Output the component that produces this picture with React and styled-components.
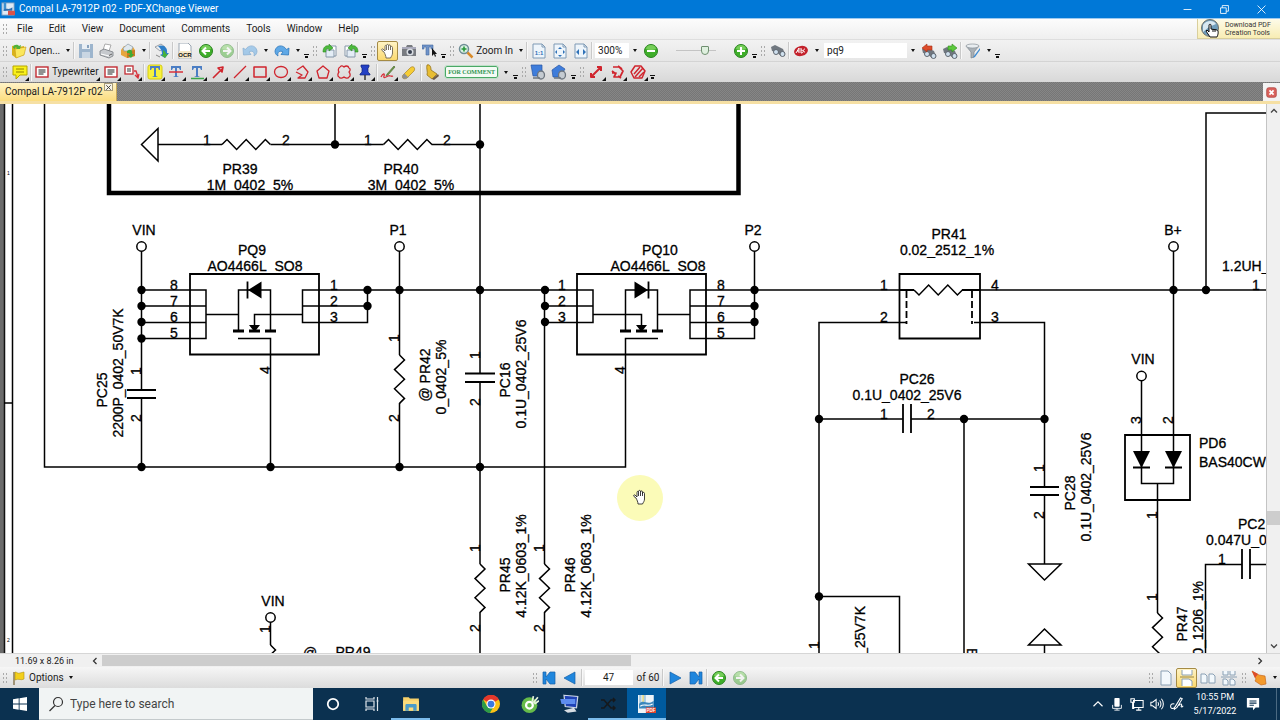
import React from "react";
import styled, { createGlobalStyle } from "styled-components";

/* ---------- small drawings ---------- */

const Ico = ({ size = 16, children }) => (
  <svg width={size} height={size} viewBox="0 0 16 16" fill="none" aria-hidden="true">
    {children}
  </svg>
);

const AppIcon = () => (
  <Ico size={14}>
    <rect x="1" y="1" width="14" height="14" fill="#dfeaf4" stroke="#6f93b8" />
    <rect x="3" y="1" width="3" height="9" fill="#3c8fd0" />
    <path d="M3 9C6 6 9 10 13 6v4H3z" fill="#2f6fb0" />
    <rect x="8" y="10" width="8" height="5" fill="#d9534a" />
  </Ico>
);
const OpenIcon = () => (
  <Ico>
    <path d="M1 3l5-1 2 2 5-1v9l-8 3-4-3z" fill="#d9b21c" />
    <path d="M4 6l11-2-2 8-8 3z" fill="#fbe75c" stroke="#c69c13" strokeWidth=".6" />
    <path d="M2 5c0-4 5-4 6-2l2-1-1 4-4 0 1-1c-1-1-2-1-2 1z" fill="#4fb33a" />
  </Ico>
);
const SaveIcon = () => (
  <Ico>
    <path d="M1 1h14v14H1z" fill="#9db5cd" />
    <path d="M4 1h8v5H4z" fill="#e8eef4" />
    <path d="M4 9h8v6H4z" fill="#c9d6e3" />
    <path d="M9 2h2v3H9z" fill="#86a1bd" />
  </Ico>
);
const PrintIcon = () => (
  <Ico>
    <path d="M6 1l6 1-2 6-6-1z" fill="#fff" stroke="#999" strokeWidth=".8" />
    <path d="M1 8l4-2 9 3v4l-4 2-9-3z" fill="#c6c9cd" stroke="#777b80" strokeWidth=".8" />
    <path d="M2 11l8 2 3-2" stroke="#fff" />
    <path d="M10 12.500l3-1.500" stroke="#555" />
  </Ico>
);
const PackageIcon = () => (
  <Ico>
    <path d="M1 7l3-4 9 1 2 3v6l-8 2-6-3z" fill="#e7a63d" />
    <path d="M7 8l8-1v6l-8 2z" fill="#c97b22" />
    <path d="M3 5l5-4 5 3-2 4-7 0z" fill="#dfe8ee" stroke="#8a9aa5" strokeWidth=".7" />
    <path d="M7 8c4-3 6 0 5 3l2 0-3 4-3-3h2c0-2-1-2-3-2z" fill="#3faa33" />
  </Ico>
);
const ScanIcon = () => (
  <Ico>
    <path d="M1 4l6-3 4 3-5 4z" fill="#e9edf1" stroke="#7a8088" strokeWidth=".7" />
    <path d="M4 3c6-2 10 2 9 7h2l-4 5-5-3 2-1c0-3-1-5-4-8z" fill="#2f7fc8" />
    <path d="M9 7c2 1 3 3 3 4h2l-3 4-4-3h2c0-2 0-3 0-5z" fill="#46b13b" />
    <path d="M2 12l4 2" stroke="#888" />
  </Ico>
);
const OcrIcon = () => (
  <Ico>
    <path d="M2 0h9l3 3v13H2z" fill="#fff" stroke="#9aa5b1" />
    <rect x="2" y="8" width="12" height="7" fill="#f5e7c4" />
    <text x="8" y="14" fontSize="6" fontWeight="bold" textAnchor="middle" fill="#111" fontFamily="Liberation Sans, sans-serif">
      OCR
    </text>
  </Ico>
);
const Round = ({ dir, faded }) => (
  <Ico>
    <g opacity={faded ? 0.45 : 1}>
      <circle cx="8" cy="8" r="6.500" fill="#3fae2a" stroke="#2a8420" />
      <path d="M3 6a5 4 0 0 1 10 0 9 5 0 0 1-10 0" fill="#8ddb6c" opacity=".7" />
      {dir === "left" && <path d="M12 8H5M8 4.500L4.500 8 8 11.500" stroke="#fff" strokeWidth="2" />}
      {dir === "right" && <path d="M4 8h7M8 4.500L11.500 8 8 11.500" stroke="#fff" strokeWidth="2" />}
      {dir === "minus" && <path d="M4 8h8" stroke="#fff" strokeWidth="2" />}
      {dir === "plus" && <path d="M4 8h8M8 4v8" stroke="#fff" strokeWidth="2" />}
    </g>
  </Ico>
);
const Turn = ({ flip, faded }) => (
  <Ico>
    <g transform={flip ? "translate(16 0) scale(-1 1)" : undefined} opacity={faded ? 0.5 : 1}>
      <path
        d="M1 5l2.500 1.500C7 1 14 2 15 8c0 2-1 4-3 5 1-4-2-6-5-4l2 2.500-7.500 .5z"
        fill="#5fa8e6"
        stroke="#2e78bd"
        strokeWidth=".8"
      />
    </g>
  </Ico>
);
const RotateIcon = ({ flip }) => (
  <Ico>
    <g transform={flip ? "translate(16 0) scale(-1 1)" : undefined}>
      <path d="M8 3h6v10H8z" fill="#fff" stroke="#8596a8" />
      <path d="M4 7h8v7H4z" fill="#e4edf6" stroke="#8596a8" />
      <path d="M1 9c0-5 3-7 6-6V1l4 4-4 3V6C5 5 3 7 4 9z" fill="#4dba3d" stroke="#2b8a22" strokeWidth=".6" />
    </g>
  </Ico>
);
const handPath =
  "M4 9L2 7.500C1 6.500 2 5.500 3 6l2 2V3.500C5 2 6.500 2 6.500 3.500V2.500C6.500 1 8.500 1 8.500 2.500V3C8.500 1.500 10.500 1.500 10.500 3v1.500C10.500 3 12.500 3 12.500 4.500V10c0 2-1 3-2 5H6c0-2-1-4-2-6zM6.500 3.500V7M8.500 3v4M10.500 4v3";
const HandIcon = () => (
  <Ico>
    <path d={handPath} fill="#fff" stroke="#6b6250" strokeWidth=".9" />
  </Ico>
);
const CameraIcon = () => (
  <Ico>
    <path d="M1 4h4l1-2h5l1 2h3v9H1z" fill="#787b80" />
    <rect x="1" y="4" width="14" height="2" fill="#aab" />
    <circle cx="9" cy="9" r="3.500" fill="#d9dde2" />
    <circle cx="9" cy="9" r="2" fill="#3a4250" />
  </Ico>
);
const TextSelectIcon = () => (
  <Ico>
    <path d="M0 2h11v4H9V4H7v8H4V4H2v2H0z" fill="#6f93c9" stroke="#4468a0" strokeWidth=".6" />
    <path d="M10 5v8l2-2 1 3 1-1-1-2h2z" fill="#111" />
  </Ico>
);
const ZoomInIcon = () => (
  <Ico>
    <circle cx="6" cy="6" r="4.500" fill="#d8f0e2" stroke="#6f8d96" strokeWidth="1.500" />
    <path d="M3.500 6h5M6 3.500v5" stroke="#27973a" strokeWidth="1.600" />
    <path d="M9.500 9.500l5 5" stroke="#d88a2a" strokeWidth="2.500" />
  </Ico>
);
const Sheet = ({ children }) => (
  <Ico>
    <path d="M2 1h9l3 3v11H2z" fill="#eef5fb" stroke="#7f9ab5" />
    <path d="M11 1v3h3" stroke="#7f9ab5" />
    {children}
  </Ico>
);
const ActualIcon = () => (
  <Sheet>
    <text x="8" y="12" fontSize="6" fontWeight="bold" textAnchor="middle" fill="#2f72b8" fontFamily="Liberation Sans, sans-serif">
      1:1
    </text>
  </Sheet>
);
const FitPageIcon = () => (
  <Sheet>
    <path d="M8 4l2 2H6zM8 14l2-2H6zM3 9l2-2v4zM13 9l-2-2v4z" fill="#2f72b8" />
  </Sheet>
);
const FitWidthIcon = () => (
  <Sheet>
    <path d="M3 9l3-3v6zM13 9l-3-3v6z" fill="#2f72b8" />
  </Sheet>
);
const Binoc = ({ x = 0, y = 0 }) => (
  <g transform={`translate(${x} ${y})`}>
    <path d="M1 4l4-2 8 4 2 5-4 2-5-4-4-1z" fill="#70777f" />
    <circle cx="6" cy="9" r="2.500" fill="#cfe0ee" stroke="#5d656e" />
    <circle cx="12.500" cy="11" r="2.500" fill="#cfe0ee" stroke="#5d656e" />
  </g>
);
const FindIcon = () => (
  <Ico>
    <Binoc />
  </Ico>
);
const FindPrev = () => (
  <Ico>
    <Binoc y={2} />
    <path d="M1 5l5-4v2h5v4H6v2z" fill="#dd4b2a" stroke="#a52f16" strokeWidth=".6" />
  </Ico>
);
const FindNext = () => (
  <Ico>
    <Binoc y={2} />
    <path d="M15 5l-5-4v2H6v4h4v2z" fill="#5cc83c" stroke="#2f8a1d" strokeWidth=".6" />
  </Ico>
);
const AbcIcon = () => (
  <Ico>
    <ellipse cx="8" cy="8" rx="7" ry="5" transform="rotate(-15 8 8)" fill="#c3212b" />
    <path d="M3 10l3-5v5M4 8h2M8 5v5c3 0 3-3 0-3M12 6c-2 0-2 3 0 3" stroke="#fff" />
  </Ico>
);
const FunnelIcon = () => (
  <Ico>
    <path d="M1 3l5 6v6l3-1V9l5-6z" fill="#a9b0b6" stroke="#7c848b" strokeWidth=".7" />
    <ellipse cx="7.500" cy="3" rx="6.500" ry="2" fill="#e9edf0" stroke="#8a9299" strokeWidth=".7" />
    <path d="M15 5l-6 8-1 2 2-1 5-7z" fill="#3b8ad2" />
  </Ico>
);
const NoteIcon = () => (
  <Ico>
    <path d="M1 2h14v9H8l-4 4v-4H1z" fill="#f9f11a" stroke="#b7a600" />
    <path d="M4 5h8M4 8h8" stroke="#8f8200" />
  </Ico>
);
const TypeIcon = () => (
  <Ico>
    <rect x="2" y="3" width="12" height="10" fill="#fff" stroke="#c22c33" strokeWidth="1.400" />
    <path d="M4.500 6h7M4.500 8h7M4.500 10h5" stroke="#222" />
  </Ico>
);
const CalloutIcon = () => (
  <Ico>
    <rect x="1" y="2" width="8" height="8" fill="#fff" stroke="#c22c33" strokeWidth="1.300" />
    <path d="M3 5h4M3 7h4" stroke="#333" />
    <path d="M10 7l2 0 2 6M11 11l3 3 1-4" stroke="#d8303a" strokeWidth="1.300" />
  </Ico>
);
const MarkT = ({ kind }) => (
  <Ico>
    {kind === "high" && <rect x="1" y="1" width="14" height="14" rx="2" fill="#f8f23c" stroke="#d5cc13" />}
    <path d="M3 2h10v4h-1l-1-2H9v8l2 1H5l2-1V4H5L4 6H3z" fill="#4b7ec4" />
    {kind === "strike" && <path d="M1 8h14" stroke="#d8303a" strokeWidth="1.500" />}
    {kind === "under" && <path d="M2 14.500h13" stroke="#3aa648" strokeWidth="1.500" />}
  </Ico>
);
const Red = ({ d, w = 1.3, children }) => (
  <Ico>
    <g stroke="#d0252e" strokeWidth={w} strokeLinejoin="round">
      {d && <path d={d} />}
      {children}
    </g>
  </Ico>
);
const PinIcon = () => (
  <Ico>
    <path d="M4 1h8v2l-1 1v4l2 2v1H3v-1l2-2V4L4 3z" fill="#2340c4" stroke="#14257c" strokeWidth=".7" />
    <path d="M8 11v5" stroke="#333" strokeWidth="1.500" />
  </Ico>
);
const PencilIcon = () => (
  <Ico>
    <path d="M14 2l-7 8-1 2 2-1 7-8z" fill="#6a9a45" stroke="#55703a" strokeWidth=".7" />
    <path d="M1 13c2-4 4-4 3-1s2 1 4 0 3 1 5 0" stroke="#d8303a" strokeWidth="1.300" />
  </Ico>
);
const EraserIcon = () => (
  <Ico>
    <path d="M2 11l7-7c3-3 6 0 4 3l-7 7c-3 2-6 0-4-3z" fill="#f6cd35" stroke="#a8832a" strokeWidth=".7" />
    <path d="M2 11l1.500-1.500 4 4L6 14c-3 2-6 0-4-3z" fill="#8d8f94" />
  </Ico>
);
const StampIcon = () => (
  <Ico>
    <path d="M3 1c3-1 4 2 4 5l6 4-5 5-5-4c1-3-1-7 0-10z" fill="#e8bd32" stroke="#94721b" strokeWidth=".8" />
    <path d="M8 15l6-5 1 2-5 4z" fill="#6e5a44" />
  </Ico>
);
const StampSheet = ({ tilt }) => (
  <Ico>
    <path d={tilt ? "M1 6l7-5 6 4-5 8-7 0z" : "M1 1h11v11H3z"} fill="#3f7ddb" stroke="#2a56a3" strokeWidth=".7" />
    <ellipse cx="11" cy="11" rx="3.500" ry="4" fill="#c5cbd1" stroke="#6c747d" strokeWidth="1.300" />
    <path d="M3 14h7" stroke="#6c747d" strokeWidth="1.500" />
  </Ico>
);
const FlagIcon = () => (
  <Ico>
    <path d="M3 2v13" stroke="#8a7a55" strokeWidth="1.500" />
    <path d="M4 2c2 0 3 2 5 1l4-1v7c-3 2-5-1-9 1z" fill="#f3cf1b" stroke="#b2920d" strokeWidth=".6" />
  </Ico>
);
const Skip = ({ bar, right }) => (
  <Ico>
    <g transform={right ? "translate(16 0) scale(-1 1)" : undefined} fill="#1f86dd" stroke="#1460a8" strokeWidth=".7">
      {bar ? <path d="M2 2h3v5l4-5h5v12H9L5 9v5H2z" /> : <path d="M2 8l11-6v12z" />}
    </g>
  </Ico>
);
const LayoutIcon = ({ kind }) => (
  <Ico>
    <g fill="#f2f8fc" stroke="#8aa0b4">
      {kind === "one" && <path d="M3 1h7l3 3v11H3z" />}
      {kind === "cont" && (
        <>
          <path d="M3 0v5h10V0M3 16V9h7l3 2v5" fill="#fff" />
          <path d="M1 7h14" stroke="#9a8440" />
        </>
      )}
      {kind === "two" && <path d="M1 4h4l2 2v7H1zM9 4h4l2 2v7H9z" />}
      {kind === "four" && <path d="M2 1v4h5V1M9 1v4h5V1M2 15V9h3l2 2v4zM9 15V9h3l2 2v4zM0 7h16" />}
    </g>
  </Ico>
);
const PointerIcon = () => (
  <Ico>
    <path d="M1 1l7 4 6 1 1 8-5 1-6-4 1-2z" fill="#f39a2c" stroke="#c9691b" strokeWidth=".7" />
    <path d="M1 1l6 3-3 4z" fill="#dd4b2a" />
  </Ico>
);

/* ---------- schematic ---------- */

const zig = (x, y) =>
  `M${x} ${y}l5 -5 9.600 10 9.600 -10 9.600 10 9.600 -10 5 5`;
const zagDown = (x, y) =>
  `M${x} ${y}l5 5 -10 9.600 10 9.600 -10 9.600 10 9.600 -5 5`;

const wires = [
  "M12.500 90V660M44.500 90V467H625.500V338.500H658",
  "M335 90V144.500M158 144.500H222M270.500 144.500H383.500M431.500 144.500H480",
  "M480 90V373M480 382V564M480 612V660",
  "M141.500 251V390M141.500 398V467",
  "M141.500 290H206V338.500H141.500M141.500 306H206M141.500 322.500H206",
  "M206 314.500H238.500M238.500 331V290H270.500V331M302.500 314.500H254.500V326",
  "M238 338.500H270.500V467",
  "M545 290H302.500V322.500H367.500V290M302.500 306H367.500",
  "M399.500 251V355M399.500 403V467",
  "M545 290H593V322.500H545M545 306H593M544.500 290V564M544.500 612V660",
  "M593 314.500H641.500V326M625.500 331V290H657.500V331M657.500 314.500H690",
  "M754.500 251V338.500H690V290H914M690 306H754.500M690 322.500H754.500",
  "M962 290H1266M1206 290V113H1270",
  "M906 322.500H819V660M819 419H903M911 419H1044.500M964 419V660",
  "M974 322.500H1044.500V487M1044.500 495V564M819 596.500H899.500V660",
  "M1044.500 645V660",
  "M1173.500 251V483.500H1141.500V381M1157.500 483.500V613",
  "M1205.500 660V564.500H1242M1250 564.500H1270",
  "M270.500 622V645",
  "M4 403H12",
];

const parts = [
  "M141.500 144.500L158 128.500V161z",
  zig(222, 144.5),
  zig(383.5, 144.5),
  "M914 290l5 5 9.600 -10 9.600 10 9.600 -10 9.600 10 5 -5",
  zagDown(399.5, 355),
  zagDown(480, 564),
  zagDown(544.5, 564),
  zagDown(270.5, 645),
  zagDown(1157.5, 613),
  "M1028.500 564H1061L1044.500 580z",
  "M1028.500 645H1061L1044.500 629z",
];

const bold = [
  "M190 274H319V354.500H190z",
  "M577 274H706V354.500H577z",
  "M899.500 274H980V338.500H899.500z",
  "M1125 435H1190V500H1125z",
  "M127 390H156M127 398H156",
  "M465 373.500H495M465 382H495",
  "M903 404V433M911 404V433",
  "M1030 487H1059M1030 495H1059",
  "M1242 549V579M1250 549V579",
  "M247.500 281.500V298.500M648.500 281.500V298.500",
  "M1133 467.500H1150M1165 467.500H1182",
  "M899.500 290H914M962 290H980",
];

const dots = [
  [335, 144.5], [480, 144.5], [141.5, 290], [141.5, 306], [141.5, 322], [141.5, 338.5],
  [367.5, 290], [367.5, 306], [399.5, 290], [480, 290], [545, 290], [545, 306], [545, 322],
  [754.5, 290], [754.5, 306], [754.5, 322], [1173.5, 290], [1206, 290],
  [141.5, 467], [270.5, 467], [399.5, 467], [480, 467],
  [819, 419], [964, 419], [1044.5, 419], [819, 596.5],
];

const terminals = [
  [141.5, 246.5], [399.5, 246.5], [754.5, 246.5], [1173.5, 246.5], [1141.5, 376], [270.5, 617.5],
];

// [text, centre x, baseline y]
const labels = [
  ["1", 207, 145], ["2", 286, 145], ["1", 368, 145], ["2", 447, 145],
  ["PR39", 240, 174], ["1M_0402_5%", 250, 190], ["PR40", 401, 174], ["3M_0402_5%", 411, 190],
  ["VIN", 144, 235], ["P1", 398, 235], ["P2", 753, 235], ["B+", 1173, 235], ["VIN", 1143, 364], ["VIN", 273, 606],
  ["PQ9", 252, 255], ["AO4466L_SO8", 255, 271], ["PQ10", 660, 255], ["AO4466L_SO8", 658, 271],
  ["8", 174, 290], ["7", 174, 306], ["6", 174, 322], ["5", 174, 338],
  ["1", 334, 290], ["2", 334, 306], ["3", 334, 322],
  ["1", 562, 290], ["2", 562, 306], ["3", 562, 322],
  ["8", 721, 290], ["7", 721, 306], ["6", 721, 322], ["5", 721, 338],
  ["PR41", 949, 239], ["0.02_2512_1%", 947, 255],
  ["1", 884, 290], ["2", 884, 322], ["4", 995, 290], ["3", 995, 322],
  ["PC26", 917, 384], ["0.1U_0402_25V6", 907, 400], ["1", 884, 419], ["2", 931, 419],
  ["1", 1256, 290], ["1", 1222, 564], ["@", 310, 658], ["PR49", 353, 657],
];

// labels that run to the right edge: [text, left x, baseline y]
const cutLabels = [
  ["1.2UH_", 1222, 271], ["PD6", 1199, 448], ["BAS40CW", 1199, 467],
  ["PC2", 1238, 529], ["0.047U_0", 1206, 545],
];

// turned a quarter left: [text, baseline x, centre y]
const upright = [
  ["PC25", 107, 390], ["2200P_0402_50V7K", 123, 373], ["1", 141, 371], ["2", 141, 418],
  ["4", 270, 370], ["1", 399, 338], ["2", 399, 418], ["@ PR42", 430, 375], ["0_0402_5%", 446, 377],
  ["1", 480, 355], ["2", 480, 402], ["PC16", 510, 380], ["0.1U_0402_25V6", 526, 374], ["4", 625, 370],
  ["1", 480, 548], ["2", 480, 628], ["PR45", 510, 575], ["4.12K_0603_1%", 526, 566],
  ["1", 544, 548], ["2", 544, 628], ["PR46", 575, 575], ["4.12K_0603_1%", 591, 566],
  ["1", 270, 629], ["1", 819, 645], ["1", 1044, 468], ["2", 1044, 515],
  ["PC28", 1075, 493], ["0.1U_0402_25V6", 1091, 487], ["3", 1141, 420], ["2", 1173, 420],
  ["1", 1157, 515], ["1", 1157, 597], ["PR47", 1187, 624],
];

const scrollTop = 104;

const Schematic = () => (
  <Drawing role="img" aria-label="Power input schematic">
    <g transform={`translate(0 ${-scrollTop})`}>
      <rect x="0" y="90" width="4" height="580" fill="#6b6b6b" />
      <path d="M4.500 90V670" stroke="#111" strokeWidth="1.500" />
      <g stroke="#000" fill="none">
        <path d="M109 90V193H738.500V90" strokeWidth="4.500" />
        <path d={wires.join("")} strokeWidth="1.500" />
        <path d={parts.join("")} strokeWidth="1.500" />
        <path d={bold.join("")} strokeWidth="1.800" />
        <path d="M906.500 291V324M972 291V324" strokeWidth="1.800" strokeDasharray="7 3" />
        <path d="M233 331H244M249 331H260M265 331H276M620 331H631M636 331H647M652 331H663" strokeWidth="3" />
      </g>
      <path
        d="M248 290L261.500 281.500V298.500zM648 290L634.500 281.500V298.500zM249 325H260L254.500 332zM636 325H647L641.500 332zM1133 451H1150L1141.500 468zM1165 451H1182L1173.500 468z"
        fill="#000"
      />
      {dots.map(([x, y]) => (
        <circle key={`${x}-${y}`} cx={x} cy={y} r="4.200" />
      ))}
      {terminals.map(([x, y]) => (
        <circle key={`${x}-${y}`} cx={x} cy={y} r="4.700" fill="#fff" stroke="#000" strokeWidth="1.500" />
      ))}
      {labels.map(([t, x, y]) => (
        <Label key={`${x}-${y}`} x={x} y={y} textAnchor="middle">{t}</Label>
      ))}
      {cutLabels.map(([t, x, y]) => (
        <Label key={t} x={x} y={y}>{t}</Label>
      ))}
      {upright.map(([t, x, y]) => (
        <Label key={`${x}-${y}`} transform={`translate(${x} ${y}) rotate(-90)`} textAnchor="middle">{t}</Label>
      ))}
      <Label transform="translate(865 606) rotate(-90)" textAnchor="end">_25V7K</Label>
      <Label transform="translate(1203 581) rotate(-90)" textAnchor="end">0_1206_1%</Label>
      <Label transform="translate(967 648) rotate(90)">E</Label>
      <Ruler x="7" y="175">1</Ruler>
      <Ruler x="7" y="642">2</Ruler>
      <circle cx="640" cy="498" r="23" fill="#fbfbb8" />
      <path d={handPath} transform="translate(632 489)" fill="#fff" stroke="#111" strokeWidth=".8" />
    </g>
  </Drawing>
);

/* ---------- page ---------- */

const menus = ["File", "Edit", "View", "Document", "Comments", "Tools", "Window", "Help"];

const T = ({ label, more, on, children }) => (
  <ToolButton type="button" aria-label={label} $more={more} $on={on}>
    {children}
  </ToolButton>
);
const Drop = ({ label = "More" }) => <DropButton type="button" aria-label={label} />;
const Overflow = () => <OverflowButton type="button" aria-label="Toolbar options" />;

const App = () => {
  return (
    <Window>
      <GlobalStyle />
      <TitleBar>
        <AppIcon />
        <Title>Compal LA-7912P r02 - PDF-XChange Viewer</Title>
        <Caption type="button" aria-label="Minimize">
          <Ico size={9}><path d="M1 8h14" stroke="#fff" strokeWidth="1.500" /></Ico>
        </Caption>
        <Caption type="button" aria-label="Restore">
          <Ico size={9}><path d="M1 5h10v10H1zM4 5V1h11v10h-4" stroke="#fff" strokeWidth="1.500" /></Ico>
        </Caption>
        <Caption type="button" aria-label="Close">
          <Ico size={9}><path d="M1 1l14 14M15 1L1 15" stroke="#fff" strokeWidth="1.500" /></Ico>
        </Caption>
      </TitleBar>

      <MenuBar>
        <Grip />
        {menus.map((m) => (
          <MenuItem type="button" key={m}>{m}</MenuItem>
        ))}
        <Download href="#tools">
          <svg width="24" height="20" viewBox="0 0 24 20" aria-hidden="true">
            <circle cx="10" cy="9" r="8.500" fill="#6f9dbb" stroke="#71716a" />
            <path d="M3 6c3-5 11-5 13-1l-7 3-6 5z" fill="#d9e9f2" />
            <path d="M10 18l-4-6 1-1 2 2V6c0-1 2-1 2 0v4l6 1c2 1 1 5 0 7z" fill="#fff" stroke="#111" />
            <path d="M13 10v3M15 10v3" stroke="#111" />
          </svg>
          <span>Download PDF<br />Creation Tools</span>
        </Download>
      </MenuBar>

      <Toolbar>
        <Grip />
        <LabelButton type="button"><OpenIcon />Open...</LabelButton>
        <Drop />
        <Sep />
        <T label="Save"><SaveIcon /></T>
        <T label="Print"><PrintIcon /></T>
        <T label="Send by e-mail"><PackageIcon /></T>
        <Drop />
        <Sep />
        <T label="Scan"><ScanIcon /></T>
        <Sep />
        <T label="Recognize text"><OcrIcon /></T>
        <T label="Back"><Round dir="left" /></T>
        <T label="Forward"><Round dir="right" faded /></T>
        <Sep />
        <T label="Undo"><Turn faded /></T>
        <Drop />
        <T label="Redo"><Turn flip /></T>
        <Drop />
        <Overflow />
        <Grip />
        <T label="Rotate left"><RotateIcon /></T>
        <T label="Rotate right"><RotateIcon flip /></T>
        <Overflow />
        <Grip />
        <T label="Hand tool" on><HandIcon /></T>
        <T label="Snapshot"><CameraIcon /></T>
        <T label="Select text"><TextSelectIcon /></T>
        <Overflow />
        <Grip />
        <LabelButton type="button"><ZoomInIcon />Zoom In</LabelButton>
        <Drop />
        <Sep />
        <T label="Actual size"><ActualIcon /></T>
        <T label="Fit page"><FitPageIcon /></T>
        <T label="Fit width"><FitWidthIcon /></T>
        <Sep />
        <Field aria-label="Zoom level" defaultValue="300%" $w={34} />
        <Drop />
        <T label="Zoom out"><Round dir="minus" /></T>
        <Slider type="range" aria-label="Zoom" min="0" max="100" defaultValue="66" />
        <T label="Zoom in"><Round dir="plus" /></T>
        <Overflow />
        <Grip />
        <T label="Find"><FindIcon /></T>
        <Sep />
        <T label="Search provider"><AbcIcon /></T>
        <Drop />
        <Field aria-label="Search text" defaultValue="pq9" $w={83} />
        <Drop />
        <T label="Find previous"><FindPrev /></T>
        <T label="Find next"><FindNext /></T>
        <Sep />
        <T label="Search options"><FunnelIcon /></T>
        <Drop />
        <Overflow />
      </Toolbar>

      <Toolbar $low>
        <Grip />
        <T label="Sticky note" more><NoteIcon /></T>
        <Sep />
        <LabelButton type="button" $more><TypeIcon />Typewriter</LabelButton>
        <T label="Text box" more><TypeIcon /></T>
        <T label="Callout" more><CalloutIcon /></T>
        <Sep />
        <T label="Highlight" more><MarkT kind="high" /></T>
        <T label="Strike out" more><MarkT kind="strike" /></T>
        <T label="Underline" more><MarkT kind="under" /></T>
        <T label="Arrow" more><Red d="M3 14L12 5M8 4l5-1-1 5z" w={1.6} /></T>
        <T label="Line" more><Red d="M3 14L15 2" /></T>
        <T label="Rectangle" more><Red d="M2 3h12v10H2z" w={1.5} /></T>
        <T label="Oval" more><Red><ellipse cx="8" cy="8" rx="6.500" ry="5.500" /></Red></T>
        <T label="Polyline" more><Red d="M3 6l6-4 5 6-3 6H4l4-3-6-3" /></T>
        <T label="Polygon" more><Red d="M8 2l6 5-2 7H4L2 7z" /></T>
        <T label="Cloud" more><Red d="M4 3c1-2 3-1 4 0 1-1 4-2 5 1 2 1 1 3 0 4 1 1 2 4 0 5-1 2-4 1-5 0-1 1-4 2-5 0-2-1-1-4 0-5-1-1-1-4 1-5z" /></T>
        <T label="File attachment" more><PinIcon /></T>
        <Sep />
        <T label="Pencil" more><PencilIcon /></T>
        <T label="Eraser"><EraserIcon /></T>
        <Sep />
        <T label="Stamp tool"><StampIcon /></T>
        <StampButton type="button"><span>FOR COMMENT</span></StampButton>
        <Drop />
        <Overflow />
        <Grip />
        <T label="Stamps palette"><StampSheet /></T>
        <T label="Add stamp"><StampSheet tilt /></T>
        <Overflow />
        <Grip />
        <T label="Distance" more><Red d="M4 12l8-8M3 9v4h4M9 3h4v4" w={2} /></T>
        <T label="Perimeter" more><Red d="M4 3l6 0 4 4-3 6H5l2-4-4 0M9 2l4 3M3 7l4 3M9 12l3 2" w={1.7} /></T>
        <T label="Area" more>
          <Red d="M5 2h6l4 5-3 7H4L1 8z" w={1.5}><path d="M4 10l6-7M5 13l8-9M9 13l5-5" /></Red>
        </T>
        <Overflow />
      </Toolbar>

      <TabStrip>
        <Tab>
          Compal LA-7912P r02
          <TabClose type="button" aria-label="Close tab">
            <Ico size={7}><path d="M3 3l10 10M13 3L3 13" stroke="#333" strokeWidth="2" /></Ico>
          </TabClose>
        </Tab>
        <CloseBox type="button" aria-label="Close document">
          <Ico size={11}>
            <rect x="1" y="1" width="14" height="14" rx="3" fill="#d9625c" stroke="#a83c38" />
            <path d="M5 5l6 6M11 5l-6 6" stroke="#fff" strokeWidth="2.500" />
          </Ico>
        </CloseBox>
      </TabStrip>

      <Viewer>
        <PageArea>
          <Schematic />
        </PageArea>
        <VScroll>
          <Ico size={8}><path d="M2 11l6-6 6 6" stroke="#444" strokeWidth="2.500" /></Ico>
          <VTrack><VThumb /></VTrack>
          <Ico size={8}><path d="M2 5l6 6 6-6" stroke="#444" strokeWidth="2.500" /></Ico>
        </VScroll>
      </Viewer>

      <HScroll>
        <PageSize>11.69 x 8.26 in</PageSize>
        <Ico size={8}><path d="M11 2L5 8l6 6" stroke="#333" strokeWidth="2.500" /></Ico>
        <HTrack><HThumb /></HTrack>
        <Ico size={8}><path d="M5 2l6 6-6 6" stroke="#333" strokeWidth="2.500" /></Ico>
      </HScroll>

      <NavBar>
        <Group>
          <Grip />
          <LabelButton type="button"><FlagIcon />Options</LabelButton>
          <Drop />
        </Group>
        <Group>
          <Grip />
          <T label="First page"><Skip bar /></T>
          <T label="Previous page"><Skip /></T>
          <Sep />
          <Field aria-label="Page" defaultValue="47" $w={48} $center />
          <PageCount>of 60</PageCount>
          <Sep />
          <T label="Next page"><Skip right /></T>
          <T label="Last page"><Skip bar right /></T>
          <Sep />
          <T label="Previous view"><Round dir="left" /></T>
          <T label="Next view"><Round dir="right" faded /></T>
        </Group>
        <Group $end>
          <Grip />
          <T label="Single page"><LayoutIcon kind="one" /></T>
          <T label="Continuous" on><LayoutIcon kind="cont" /></T>
          <T label="Facing"><LayoutIcon kind="two" /></T>
          <T label="Continuous facing"><LayoutIcon kind="four" /></T>
          <Grip />
          <T label="Launch"><PointerIcon /></T>
          <Drop />
        </Group>
      </NavBar>

      <TaskBar>
        <Start type="button" aria-label="Start">
          <Ico size={14}><path d="M0 2.500l6.500-1v6H0zM7.500 1.300L16 0v7.500H7.500zM0 8.500h6.500v6L0 13.500zM7.500 8.500H16V16l-8.500-1.300z" fill="#fff" /></Ico>
        </Start>
        <Search>
          <Ico><circle cx="10" cy="6" r="4.500" stroke="#333" strokeWidth="1.200" /><path d="M7 9.500L1.500 15" stroke="#333" strokeWidth="1.200" /></Ico>
          <input aria-label="Search" placeholder="Type here to search" />
        </Search>
        <Task type="button" aria-label="Cortana">
          <Ico size={14}><circle cx="8" cy="8" r="6" stroke="#fff" strokeWidth="2" /></Ico>
        </Task>
        <Task type="button" aria-label="Task view">
          <Ico><path d="M2 5h8v6H2zM2 1v2h8V1M2 15v-2h8v2M13.500 1v14M12.500 5h2" stroke="#dfe6ec" strokeWidth="1.200" /></Ico>
        </Task>
        <Task type="button" aria-label="File Explorer" $open>
          <Ico size={18}>
            <path d="M1 2h5l1 1h8v11H1z" fill="#f7d16a" />
            <path d="M1 5h14v9H1z" fill="#fbdc7c" />
            <path d="M3 14V9c0-1 1-1 1-1h8s1 0 1 1v5h-3v-3H6v3z" fill="#4a9bc9" />
          </Ico>
        </Task>
        <TaskGap />
        <Task type="button" aria-label="Chrome">
          <Ico size={18}>
            <circle cx="8" cy="8" r="8" fill="#fbc116" />
            <path d="M8 8L1 4a8 8 0 0 1 14 0z" fill="#e5372b" />
            <path d="M8 8L4.500 10 1 4a8 8 0 0 0 6 12l3.500-6z" fill="#2b9c48" />
            <circle cx="8" cy="8" r="4" fill="#fff" />
            <circle cx="8" cy="8" r="3" fill="#3b78e0" />
          </Ico>
        </Task>
        <Task type="button" aria-label="Coc Coc">
          <Ico size={18}>
            <circle cx="7.500" cy="9" r="7" fill="#66bb4a" />
            <circle cx="7.500" cy="9" r="3" stroke="#fff" strokeWidth="2" />
            <path d="M10 6l1-5M11 7l4-5M12 8l4-3" stroke="#e7f3dc" strokeWidth="1.500" />
          </Ico>
        </Task>
        <Task type="button" aria-label="Remote computer">
          <Ico size={20}>
            <path d="M4 1l11 1-1 9-9-1z" fill="#1f42b5" stroke="#ccd6e6" />
            <path d="M1 4h12v4H2z" fill="#5e8df0" />
            <path d="M4 13l8-2 2 3-7 1z" fill="#d8dde3" />
          </Ico>
        </Task>
        <Task type="button" aria-label="Shuffle" $open>
          <Ico><path d="M1 4h3l7 8h4M1 12h3l7-8h4M13 2l2 2-2 2M13 10l2 2-2 2" stroke="#16191c" strokeWidth="1.500" /></Ico>
        </Task>
        <Task type="button" aria-label="PDF-XChange Viewer" $open $active>
          <Ico size={18}>
            <path d="M0 0h14v16H0z" fill="#eef4f8" />
            <path d="M1 0h2v10H1zM5 0h2v10H5z" fill="#a9cbe2" />
            <path d="M4 0h1v8H4z" fill="#e9d255" />
            <path d="M1 8c4-5 7 2 13-3v7H1z" fill="#3a87bd" />
            <path d="M2 10c4-3 6 1 11-2" stroke="#fff" />
            <rect x="7" y="11" width="9" height="5" fill="#e2452e" />
            <text x="11.500" y="15.200" fontSize="4" fontWeight="bold" textAnchor="middle" fill="#fff" fontFamily="Liberation Sans, sans-serif">PDF</text>
          </Ico>
        </Task>
        <Tray>
          <Ico size={12}><path d="M2 11l6-6 6 6" stroke="#fff" strokeWidth="1.500" /></Ico>
          <Ico size={14}><rect x="5" y="1" width="6" height="10" rx="1" fill="#fff" /><path d="M3 9v4h10V9M8 13v2M5 15h6" stroke="#fff" /></Ico>
          <Ico size={14}><path d="M4 4h11v8H4zM7 15h6M10 12v3M1 2h4v4H1zM3 6v7h2" stroke="#fff" strokeWidth="1.200" /></Ico>
          <Ico size={14}><path d="M1 6h2l4-3v10l-4-3H1zM9 6c1 1 1 3 0 4M11 4c2 2 2 6 0 8M13 2c3 3 3 9 0 12" stroke="#fff" strokeWidth="1.200" /></Ico>
          <Ico size={14}><path d="M5 8c-3-1-5 1-4 4 1 2 4 1 5-1l6-10 2 1-6 10-3 2 0-3M10 10c2-3 4-2 3 0s1 2 2 0" stroke="#fff" strokeWidth="1.200" /></Ico>
          <Clock>10:55 PM<br />5/17/2022</Clock>
          <Ico size={14}><path d="M1 1h14v11h-4l-3 3v-3H1z" fill="#fff" /><path d="M4 4.500h8M4 7h8M4 9.500h5" stroke="#0b3150" strokeWidth="1.200" /></Ico>
        </Tray>
      </TaskBar>
    </Window>
  );
};

export default App;

const GlobalStyle = createGlobalStyle`
  * {
    box-sizing: border-box;
  }
  body {
    margin: 0;
  }
  button, input {
    font: inherit;
    color: inherit;
    border: 0;
    padding: 0;
    background: none;
  }
  svg {
    display: block;
    flex: none;
  }
`;

const Window = styled.div`
  display: flex;
  flex-direction: column;
  height: 100vh;
  overflow: hidden;
  font-family: Roboto, "Open Sans", sans-serif;
  font-size: 10px;
  line-height: 12px;
  color: #1a1a1a;
  background: #e6e6e6;
`;

const TitleBar = styled.header`
  display: flex;
  align-items: center;
  flex: none;
  height: 19px;
  padding-left: 1px;
  background: #0078d7;
  border-bottom: 1px solid #9dcaf0;
  color: #fff;
`;
const Title = styled.span`
  flex: 1;
  padding-left: 4px;
`;
const Caption = styled.button`
  display: flex;
  justify-content: center;
  width: 37px;
`;

const MenuBar = styled.nav`
  display: flex;
  align-items: center;
  flex: none;
  height: 20px;
  background: linear-gradient(#fcfcfc, #efefef);
`;
const MenuItem = styled.button`
  padding: 0 8px;
`;
const Download = styled.a`
  display: flex;
  align-items: center;
  gap: 1px;
  width: 83px;
  height: 20px;
  margin-left: auto;
  padding-left: 2px;
  font-size: 7px;
  line-height: 8px;
  color: #333;
  text-decoration: none;
  background: linear-gradient(#fdfbe9, #f8edb4);
  border: 1px solid #d9cf9c;
  border-width: 0 0 1px 1px;
  white-space: nowrap;
`;

const Toolbar = styled.div`
  display: flex;
  align-items: center;
  flex: none;
  height: ${(p) => (p.$low ? "21px" : "22px")};
  background: ${(p) => (p.$low ? "linear-gradient(#e9e9e9, #d8d8d8)" : "linear-gradient(#f2f2f2, #e6e6e6)")};
  border-top: 1px solid ${(p) => (p.$low ? "#d4d4d4" : "#dedede")};
`;
const Grip = styled.span`
  flex: none;
  width: 9px;
  height: 12px;
  background: radial-gradient(circle, #aaa 1px, transparent 1px) 2px 0 / 3px 4px;
  background-clip: content-box;
  padding: 0 1px 0 2px;
`;
const Sep = styled.span`
  flex: none;
  width: 2px;
  height: 17px;
  border-left: 1px solid #c9c9c9;
  border-right: 1px solid #f8f8f8;
`;
const corner = (p) =>
  p.$more
    ? `&::after {
    content: "";
    position: absolute;
    right: 1px;
    bottom: 1px;
    border: 2px solid #111;
    border-top-color: transparent;
    border-left-color: transparent;
  }`
    : "";
const ToolButton = styled.button`
  position: relative;
  display: flex;
  align-items: center;
  justify-content: center;
  flex: none;
  width: 21px;
  height: 20px;
  ${(p) =>
    p.$on &&
    `background: linear-gradient(#fff3c4, #fbd96f);
    border: 1px solid #a58b45;
    border-radius: 2px;`}
  ${corner}
`;
const LabelButton = styled.button`
  position: relative;
  display: flex;
  align-items: center;
  flex: none;
  gap: 2px;
  height: 20px;
  padding: 0 2px;
  white-space: nowrap;
  ${corner}
`;
const DropButton = styled.button`
  display: flex;
  justify-content: center;
  flex: none;
  width: 11px;
  &::after {
    content: "";
    border: 2px solid transparent;
    border-top: 3px solid #111;
    border-bottom: 0;
  }
`;
const OverflowButton = styled.button`
  display: flex;
  justify-content: center;
  align-self: flex-end;
  flex: none;
  width: 7px;
  height: 7px;
  &::after {
    content: "";
    width: 5px;
    height: 5px;
    border-top: 1px solid #111;
    background: linear-gradient(#111, #111) center 1px / 3px 2px no-repeat;
  }
`;
const Field = styled.input`
  flex: none;
  width: ${(p) => p.$w}px;
  height: 15px;
  margin-left: 2px;
  padding: 0 3px;
  background: #fff;
  text-align: ${(p) => (p.$center ? "center" : "left")};
`;
const Slider = styled.input`
  appearance: none;
  flex: none;
  width: 69px;
  height: 16px;
  margin: 0;
  padding: 0 2px;
  background: linear-gradient(#c4c4c4, #c4c4c4) center / 40px 1px no-repeat;
  &::-webkit-slider-thumb {
    appearance: none;
    width: 8px;
    height: 9px;
    border: 1px solid #6f8f70;
    border-radius: 1px 1px 4px 4px;
    background: #dff0df;
  }
`;
const StampButton = styled.button`
  display: flex;
  align-items: center;
  justify-content: center;
  flex: none;
  width: 58px;
  height: 16px;
  span {
    width: 53px;
    border: 1px solid #4aa866;
    border-radius: 2px;
    outline: 1px solid #bfe0c8;
    background: #f4fbf5;
    color: #2d9350;
    font-family: "Liberation Serif", serif;
    font-size: 6px;
    font-weight: bold;
    line-height: 10px;
    white-space: nowrap;
  }
`;

const TabStrip = styled.div`
  display: flex;
  align-items: stretch;
  justify-content: space-between;
  flex: none;
  height: 22px;
  padding-top: 1px;
  background: repeating-conic-gradient(#767676 0 25%, #868686 0 50%) 0 0 / 2px 2px;
  border-bottom: 3px solid #f6e0a4;
`;
const Tab = styled.div`
  display: flex;
  justify-content: space-between;
  width: 117px;
  padding: 0 3px 0 5px;
  line-height: 18px;
  background: linear-gradient(#fff3c6, #fbdc7e);
  border-right: 1px solid #c9a956;
  white-space: nowrap;
`;
const TabClose = styled.button`
  display: flex;
  align-items: center;
  justify-content: center;
  width: 9px;
  height: 8px;
  background: #f7f3e6;
  border: 1px solid #a89c78;
`;
const CloseBox = styled.button`
  display: flex;
  align-items: center;
  justify-content: center;
  width: 17px;
  background: #f3f3f3;
`;

const Viewer = styled.main`
  display: flex;
  flex: 1;
  min-height: 0;
`;
const PageArea = styled.section`
  flex: 1;
  min-width: 0;
  background: #fff;
`;
const Drawing = styled.svg`
  width: 100%;
  height: 100%;
  overflow: hidden;
  font-family: "Liberation Sans", Arial, sans-serif;
`;
const Label = styled.text`
  font-size: 14px;
  stroke: #000;
  stroke-width: 0.3;
`;
const Ruler = styled.text`
  font-size: 5px;
`;
const VScroll = styled.div`
  display: flex;
  flex-direction: column;
  align-items: center;
  flex: none;
  width: 14px;
  padding: 3px 0;
  background: #f0f0f0;
  border-left: 1px solid #c4c4c4;
`;
const VTrack = styled.div`
  flex: 1;
  display: flex;
  flex-direction: column;
  align-self: stretch;
  padding-top: 396px;
`;
const VThumb = styled.div`
  height: 14px;
  background: #cdcdcd;
`;

const HScroll = styled.div`
  display: flex;
  align-items: center;
  flex: none;
  height: 14px;
  padding-right: 16px;
  background: #f0f0f0;
  border-top: 1px solid #d6d6d6;
`;
const PageSize = styled.span`
  width: 91px;
  padding-left: 15px;
  font-size: 9px;
  white-space: nowrap;
`;
const HTrack = styled.div`
  flex: 1;
  display: flex;
  align-self: stretch;
  padding: 1px 3px;
`;
const HThumb = styled.div`
  width: 46%;
  background: #cdcdcd;
`;

const NavBar = styled.footer`
  display: grid;
  grid-template-columns: 1fr auto 1fr;
  align-items: center;
  flex: none;
  height: 21px;
  background: linear-gradient(#f6f6f6, #dcdcdc);
`;
const Group = styled.div`
  display: flex;
  align-items: center;
  justify-content: ${(p) => (p.$end ? "flex-end" : "flex-start")};
`;
const PageCount = styled.span`
  padding: 0 3px 0 4px;
`;

const TaskBar = styled.div`
  display: flex;
  flex: none;
  height: 32px;
  background: #0b3150;
`;
const Start = styled.button`
  display: flex;
  align-items: center;
  justify-content: center;
  width: 39px;
`;
const Search = styled.label`
  display: flex;
  align-items: center;
  gap: 6px;
  width: 274px;
  padding-left: 9px;
  background: #f1f4f4;
  border-bottom: 1px solid #c4cacc;
  input {
    flex: 1;
    font-size: 12px;
    outline: 0;
  }
  input::placeholder {
    color: #444;
    opacity: 1;
  }
`;
const Task = styled.button`
  display: flex;
  align-items: center;
  justify-content: center;
  flex: none;
  width: 39px;
  background: ${(p) => (p.$active ? "#005a9e" : "transparent")};
  box-shadow: ${(p) => (p.$open ? "inset 0 -2px #7cbcec" : "none")};
`;
const TaskGap = styled.span`
  width: 41px;
`;
const Tray = styled.div`
  display: flex;
  align-items: center;
  gap: 6px;
  margin: 0 3px 0 auto;
  padding-right: 16px;
  border-right: 1px solid #4b6a82;
  color: #fff;
`;
const Clock = styled.time`
  width: 50px;
  font-size: 9px;
  line-height: 14px;
  text-align: center;
`;
